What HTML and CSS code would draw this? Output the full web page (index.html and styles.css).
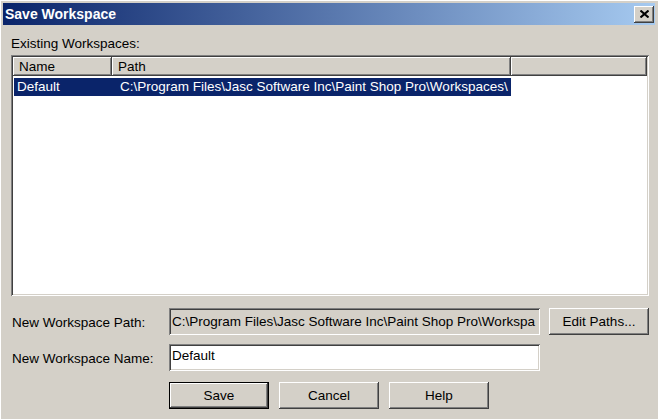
FILE: index.html
```html
<!DOCTYPE html>
<html lang="en">
<head>
    <meta charset="UTF-8">
    <title>Save Workspace</title>
    <link rel="stylesheet" href="styles.css">
</head>
<body>

    <div class="window">
        <!-- Title bar -->
        <div class="titlebar">
            <span class="title">Save Workspace</span>
            <button class="close" type="button">
                <svg width="9" height="8" viewBox="0 0 9 8">
                    <path d="M0.5 0.5 L8.5 7.5 M8.5 0.5 L0.5 7.5" stroke="#000" stroke-width="2" fill="none"/>
                </svg>
            </button>
        </div>

        <div class="content">
            <div class="caption">Existing Workspaces:</div>

            <!-- Workspace list -->
            <div class="listview">
                <div class="list-header">
                    <div class="col col-name">Name</div>
                    <div class="col col-path">Path</div>
                    <div class="col col-rest"></div>
                </div>
                <div class="list-row selected">
                    <div class="cell cell-name">Default</div>
                    <div class="cell cell-path">C:\Program Files\Jasc Software Inc\Paint Shop Pro\Workspaces\</div>
                </div>
            </div>

            <!-- Path / name fields -->
            <div class="form">
                <label class="label">New Workspace Path:</label>
                <div class="field readonly">C:\Program Files\Jasc Software Inc\Paint Shop Pro\Workspa</div>
                <button class="btn" type="button">Edit Paths...</button>

                <label class="label">New Workspace Name:</label>
                <div class="field">Default</div>
                <div></div>
            </div>

            <div class="actions">
                <button class="btn default" type="button">Save</button>
                <button class="btn" type="button">Cancel</button>
                <button class="btn" type="button">Help</button>
            </div>
        </div>
    </div>

</body>
</html>
```

FILE: styles.css
```css
body {
    margin: 0;
    padding: 0;
    background-color: #d4d0c8;
    font-family: "Liberation Sans", Arial, sans-serif;
    font-size: 13.5px;
    color: #000;
    overflow: hidden;
}

.window {
    width: 658px;
    height: 419px;
    box-sizing: border-box;
    padding: 3px;
    overflow: hidden;
    background-color: #d4d0c8;
    box-shadow: inset 1px 1px #ffffff;
}

/* Title bar */
.titlebar {
    height: 22px;
    display: flex;
    align-items: center;
    justify-content: space-between;
    padding: 0 1px 0 2px;
    background: linear-gradient(to right, #0a246a, #a6caf0);
}

.title {
    color: #fff;
    font-weight: bold;
    font-size: 14px;
}

.close {
    width: 20px;
    height: 17px;
    padding: 0;
    border: none;
    display: flex;
    align-items: center;
    justify-content: center;
    background-color: #d4d0c8;
    box-shadow: inset -1px -1px #404040, inset 1px 1px #ffffff, inset -2px -2px #808080;
}

.content {
    padding: 10px 6px 0 8px;
}

.caption {
    height: 20px;
    line-height: 17px;
}

/* List view */
.listview {
    height: 241px;
    background-color: #fff;
    padding: 2px;
    box-sizing: border-box;
    box-shadow: inset 1px 1px #808080, inset -1px -1px #ffffff, inset 2px 2px #404040, inset -2px -2px #d4d0c8;
}

.list-header {
    display: flex;
    height: 19px;
}

.col {
    background-color: #d4d0c8;
    line-height: 19px;
    padding-left: 6px;
    box-sizing: border-box;
    box-shadow: inset -1px -1px #404040, inset 1px 1px #ffffff, inset -2px -2px #808080;
}

.col-name { width: 99px; }
.col-path { width: 399px; }
.col-rest { flex: 1; }

.list-row {
    display: flex;
    width: 497px;
    height: 18px;
    margin-top: 2px;
    margin-left: 1px;
    line-height: 18px;
}

.list-row.selected {
    background-color: #0a246a;
    color: #fff;
}

.cell {
    white-space: nowrap;
    overflow: hidden;
}

.cell-name {
    width: 102px;
    padding-left: 3px;
}

.cell-path {
    flex: 1;
    padding-left: 1px;
}

/* Fields */
.form {
    display: grid;
    grid-template-columns: 149px 371px 100px;
    grid-template-rows: 27px 27px;
    column-gap: 9px;
    row-gap: 9px;
    margin-top: 12px;
}

.label {
    display: flex;
    align-items: center;
    padding-left: 1px;
    padding-top: 2px;
    white-space: nowrap;
}

.field {
    background-color: #fff;
    padding: 3px 3px 0 3px;
    box-sizing: border-box;
    white-space: nowrap;
    overflow: hidden;
    line-height: 17px;
    box-shadow: inset 1px 1px #808080, inset -1px -1px #ffffff, inset 2px 2px #404040, inset -2px -2px #d4d0c8;
}

.field.readonly {
    background-color: #d4d0c8;
    padding-top: 5px;
}

/* Buttons */
.btn {
    height: 27px;
    width: 100px;
    border: none;
    padding: 0;
    background-color: #d4d0c8;
    font-family: "Liberation Sans", Arial, sans-serif;
    font-size: 13.5px;
    color: #000;
    box-shadow: inset -1px -1px #404040, inset 1px 1px #ffffff, inset -2px -2px #808080;
}

.btn.default {
    box-shadow: inset 0 0 0 1px #000, inset -2px -2px #404040, inset 2px 2px #ffffff, inset -3px -3px #808080;
}

.actions {
    display: flex;
    gap: 10px;
    margin-top: 11px;
    margin-left: 158px;
}
```
